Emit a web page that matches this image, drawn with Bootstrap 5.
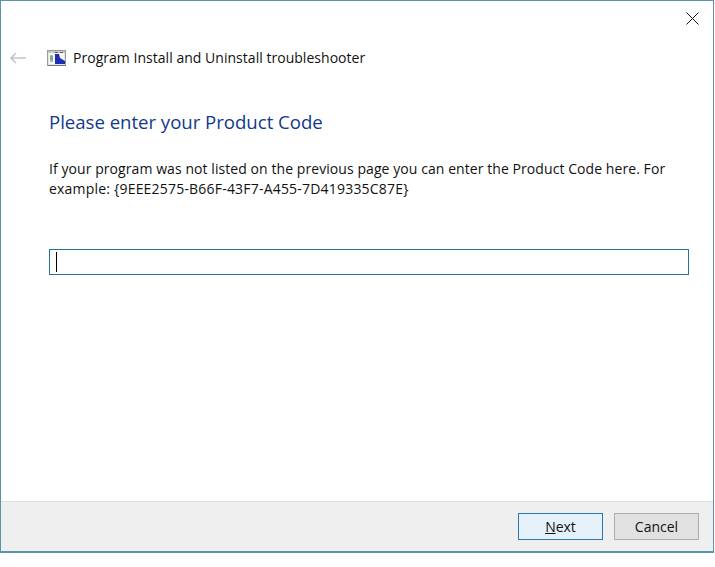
<!DOCTYPE html>
<html lang="en">
<head>
<meta charset="utf-8">
<title>Program Install and Uninstall troubleshooter</title>
<link href="https://cdn.jsdelivr.net/npm/bootstrap@5.3.0/dist/css/bootstrap.min.css" rel="stylesheet">
<style>
html,body{background:#fff;margin:0;height:100%;overflow:hidden}
body{font-family:"Open Sans","Noto Sans","Liberation Sans",sans-serif;color:#111}
.wiz-frame{width:714px;height:553px;border:1px solid #5b93ad;border-width:1px 1px 2px 1px}
.wiz-close{height:37px;padding:11px 14px 0 0}
.wiz-head{height:40px;padding-left:8px}
.wiz-icon{margin-left:20px}
.wiz-title{font-size:14px;margin-left:6px;line-height:20px;letter-spacing:.03px}
.wiz-body{padding:0 24px 0 48px}
.wiz-main{font-size:18.6px;line-height:26px;color:#123a8c;margin:31px 0 0;font-weight:400;letter-spacing:-.02px}
.wiz-text{font-size:14px;line-height:20px;margin:24px 0 0;width:640px}
.wiz-line1{letter-spacing:.07px}
.wiz-line2{letter-spacing:.2px}
.wiz-input{height:26px;width:640px;border:1px solid #26709f;margin-top:50px;padding:2px 6px}
.wiz-caret{width:1px;height:20px;background:#000}
.wiz-foot{height:50px;background:#efefef;border-top:1px solid #dfdfdf;padding:11px 14px 0 0;gap:11px}
.wiz-btn{width:85px;height:27px;font-size:14px;line-height:25px;padding:0;border-radius:0;color:#111;text-align:center;border:1px solid #adadad;background:#e1e1e1}
.wiz-btn.wiz-def{border-color:#2a79ad;background:#e5f1fb}
</style>
</head>
<body>
<div class="wiz-frame d-flex flex-column">
  <div class="wiz-close d-flex justify-content-end">
    <svg width="13" height="13" viewBox="0 0 13 13"><path d="M.5.5l12 12M12.500.5l-12 12" stroke="#111" fill="none"/></svg>
  </div>
  <div class="wiz-head d-flex align-items-center">
    <svg width="18" height="12" viewBox="0 0 18 12" class="flex-shrink-0"><path d="M17 6H2M7 1L2 6l5 5" stroke="#c4c4c4" stroke-width="1.600" fill="none"/></svg>
    <svg width="20" height="17" viewBox="0 0 20 17" class="flex-shrink-0 wiz-icon">
      <rect x=".5" y=".5" width="18" height="15" fill="#e4e4e4" stroke="#9a9a9a"/>
      <path d="M1 1h17v2H1z" fill="#c9c9c9"/>
      <path d="M8 2h3v1H8zM13 2h3v1h-3z" fill="#5c5c5c"/>
      <rect x="2" y="3" width="15" height="11" fill="#f7f7f7"/>
      <path d="M8 4h4l1 4 5 3v3H8z" fill="#1d2fb0"/>
      <path d="M3 5h3v7H3z" fill="#a9c0a5"/>
      <path d="M3 7h3M3 9h3" stroke="#5f8f6a"/>
      <path d="M1 15.500h18" stroke="#777"/>
    </svg>
    <span class="wiz-title">Program Install and Uninstall troubleshooter</span>
  </div>
  <div class="wiz-body flex-grow-1">
    <h1 class="wiz-main">Please enter your Product Code</h1>
    <p class="wiz-text"><span class="wiz-line1 d-block">If your program was not listed on the previous page you can enter the Product Code here. For</span><span class="wiz-line2 d-block">example: {9EEE2575-B66F-43F7-A455-7D419335C87E}</span></p>
    <div class="wiz-input"><div class="wiz-caret"></div></div>
  </div>
  <div class="wiz-foot d-flex justify-content-end align-items-start">
    <button type="button" class="btn wiz-btn wiz-def"><span class="text-decoration-underline">N</span>ext</button>
    <button type="button" class="btn wiz-btn">Cancel</button>
  </div>
</div>
<script src="https://cdn.jsdelivr.net/npm/bootstrap@5.3.0/dist/js/bootstrap.bundle.min.js"></script>
</body>
</html>
